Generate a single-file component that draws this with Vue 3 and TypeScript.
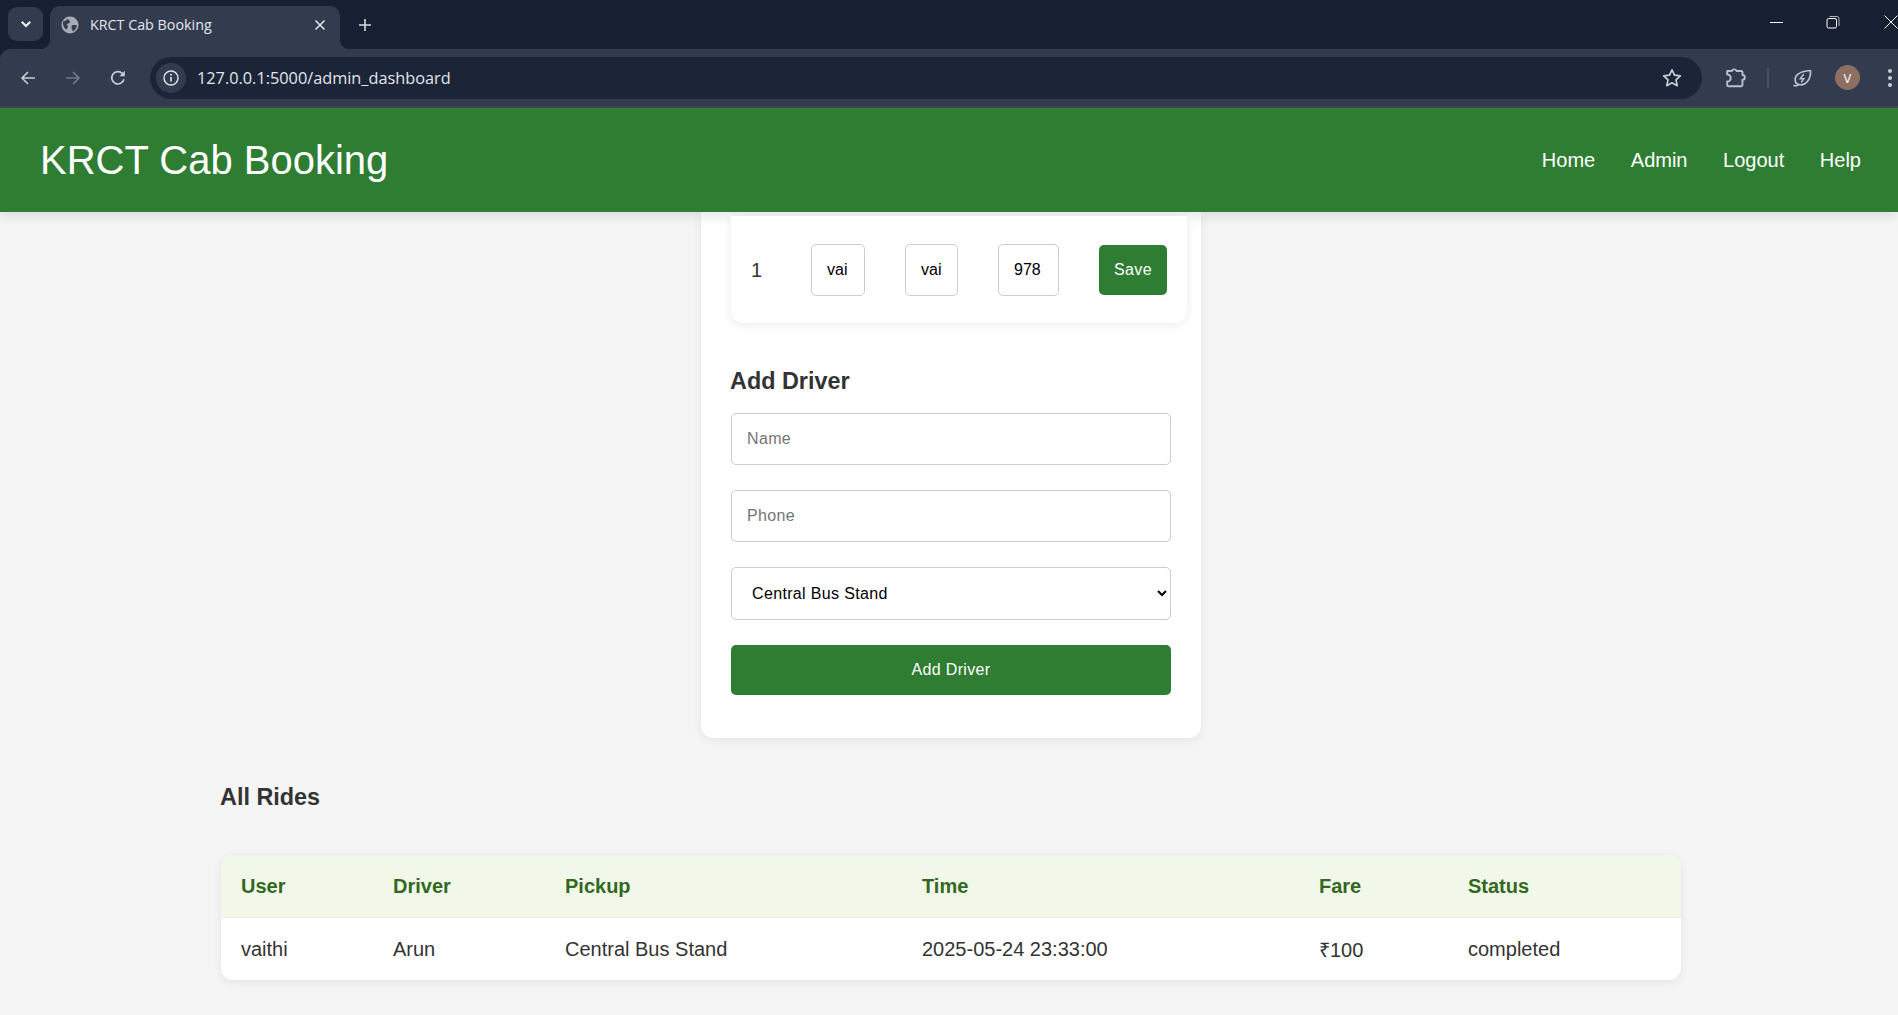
<script setup lang="ts">
interface Ride { user: string; driver: string; pickup: string; time: string; fare: string; status: string }
const rides: Ride[] = [
  { user: 'vaithi', driver: 'Arun', pickup: 'Central Bus Stand', time: '2025-05-24 23:33:00', fare: '₹100', status: 'completed' },
]
const heads: string[] = ['User', 'Driver', 'Pickup', 'Time', 'Fare', 'Status']
const cols: number[] = [152, 172, 357, 397, 149, 233]
</script>

<template>
  <div class="page">
    <div class="chrome">
      <div class="tabstrip">
        <div class="tabsearch">
          <svg width="12" height="12" viewBox="0 0 12 12"><path d="M1.800 3.800l4.200 4.200 4.200-4.200" fill="none" stroke="#eef0f4" stroke-width="2"/></svg>
        </div>
        <div class="tab">
          <svg class="favicon" width="18" height="18" viewBox="0 0 18 18">
            <circle cx="9" cy="9" r="8.500" fill="#a6abb5"/>
            <path d="M2 5.500c2 0 3-1 4-2.500 1 1 3 1 3 3 0 1.500-2 1-3 2-.6.800 1 1.500 1 3 0 1-1 1-1.500 2.500C4 13 1.500 10 2 5.500zM11 9.500c1.500-.8 3-.5 4.800-.2 0 2.500-1.500 5-3.800 6.200-.5-1.500-2.500-4.500-1-6z" fill="#343d50"/>
          </svg>
          <span class="tabtitle">KRCT Cab Booking</span>
          <svg class="tabclose" width="12" height="12" viewBox="0 0 12 12"><path d="M1.500 1.500l9 9M10.500 1.500l-9 9" stroke="#e3e6ec" stroke-width="1.500"/></svg>
        </div>
        <svg class="plus" width="14" height="14" viewBox="0 0 14 14"><path d="M7 1v12M1 7h12" stroke="#d8dce4" stroke-width="1.600"/></svg>
        <div class="winctrls">
          <svg width="14" height="14" viewBox="0 0 14 14"><path d="M0 7.500h13" stroke="#fff" stroke-width="1"/></svg>
          <svg class="restore" width="14" height="14" viewBox="0 0 14 14"><rect x="1" y="3.500" width="9.500" height="9.500" rx="1.500" fill="none" stroke="#fff"/><path d="M3.500 1.500h7.500a2 2 0 0 1 2 2v7.500" fill="none" stroke="#aeb3bd"/></svg>
          <svg width="14" height="14" viewBox="0 0 14 14"><path d="M.5.500l13 13M13.500.500l-13 13" stroke="#fff"/></svg>
        </div>
      </div>
      <div class="toolbar">
        <svg class="tb" width="16" height="16" viewBox="0 0 16 16"><path d="M15 8H2M8 2L2 8l6 6" fill="none" stroke="#c8ccd6" stroke-width="1.600"/></svg>
        <svg class="tb" width="16" height="16" viewBox="0 0 16 16"><path d="M1 8h13M8 2l6 6-6 6" fill="none" stroke="#737a89" stroke-width="1.600"/></svg>
        <svg class="tb" width="16" height="16" viewBox="0 0 16 16"><path d="M14 9.300A6.200 6.200 0 1 1 12.300 3.300L14 5" fill="none" stroke="#c8ccd6" stroke-width="1.700"/><path d="M14.800 .800v5.400h-5.400z" fill="#c8ccd6"/></svg>
        <div class="omnibox">
          <div class="infochip">
            <svg width="16" height="16" viewBox="0 0 16 16"><circle cx="8" cy="8" r="7" fill="none" stroke="#dfe3ea" stroke-width="1.400"/><path d="M8 7v4.500" stroke="#dfe3ea" stroke-width="1.600"/><circle cx="8" cy="4.800" r="1" fill="#dfe3ea"/></svg>
          </div>
          <span class="url">127.0.0.1:5000/admin_dashboard</span>
          <svg class="star" width="20" height="20" viewBox="0 0 20 20"><path d="M10 1.800l2.500 5.400 5.800.7-4.300 4 1.200 5.800-5.200-2.900-5.200 2.900 1.200-5.800-4.300-4 5.800-.7z" fill="none" stroke="#c8ccd6" stroke-width="1.700" stroke-linejoin="round"/></svg>
        </div>
        <svg class="ext" width="20" height="20" viewBox="2 2 17 17"><path d="M3 4.500H7a2.200 2.200 0 0 1 4 0h4a1 1 0 0 1 1 1V8a2 2 0 0 1 0 4v4.500a1 1 0 0 1-1 1H4a1 1 0 0 1-1-1v-3a3 3 0 0 0 0-6z" fill="none" stroke="#b9c0cf" stroke-width="1.600" stroke-linejoin="round"/></svg>
        <div class="divider"></div>
        <svg class="leaf" width="20" height="20" viewBox="0 0 20 20"><path d="M4 15C1 9 6 3 18.500 2.500 19 12 13 18.500 7 16.500c-1-.3-2-.7-3-1.500zM2 17.500c1 .4 3 .4 4.500-.6" fill="none" stroke="#b9c0cf" stroke-width="1.700" stroke-linecap="round" stroke-linejoin="round"/><path d="M11.800 6L8.300 10.800h3.400L9.200 14.500" fill="none" stroke="#b9c0cf" stroke-width="1.500"/></svg>
        <div class="avatar">V</div>
        <svg class="dots" width="4" height="18" viewBox="0 0 4 18"><circle cx="2" cy="2" r="2" fill="#c8ccd6"/><circle cx="2" cy="9" r="2" fill="#c8ccd6"/><circle cx="2" cy="16" r="2" fill="#c8ccd6"/></svg>
      </div>
    </div>

    <header class="topbar">
      <h1>KRCT Cab Booking</h1>
      <nav class="nav">
        <a>Home</a><a>Admin</a><a>Logout</a><a>Help</a>
      </nav>
    </header>

    <main class="content">
      <section class="card">
        <div class="drivers">
          <span class="idcell">1</span>
          <input class="mini w54" value="vaithi" />
          <input class="mini w53" value="vaithi" />
          <input class="mini w61" value="978" />
          <button class="save">Save</button>
        </div>

        <h3 class="addtitle">Add Driver</h3>
        <form class="addform" @submit.prevent>
          <input class="field" placeholder="Name" />
          <input class="field" placeholder="Phone" />
          <select class="field sel"><option>Central Bus Stand</option></select>
          <button class="addbtn">Add Driver</button>
        </form>
      </section>

      <h3 class="ridestitle">All Rides</h3>
      <table class="rides">
        <colgroup><col v-for="(c, i) in cols" :key="i" :style="{ width: c + 'px' }" /></colgroup>
        <thead>
          <tr><th v-for="h in heads" :key="h">{{ h }}</th></tr>
        </thead>
        <tbody>
          <tr v-for="r in rides" :key="r.time">
            <td>{{ r.user }}</td><td>{{ r.driver }}</td><td>{{ r.pickup }}</td>
            <td>{{ r.time }}</td><td>{{ r.fare }}</td><td>{{ r.status }}</td>
          </tr>
        </tbody>
      </table>
    </main>
  </div>
</template>

<style>
html, body { margin: 0; overflow: hidden; background: #f5f5f5; }
</style>

<style scoped>
.page { height: 1015px; display: flex; flex-direction: column; overflow: hidden; font-family: "Liberation Sans", Arial, sans-serif; font-size: 20px; color: #333; background: #f5f5f5; }

.chrome { height: 108px; flex: none; background: #172033; font-family: "Open Sans", "Noto Sans", sans-serif; }
.tabstrip { height: 49px; display: flex; align-items: flex-start; box-sizing: border-box; padding: 7px 0 0 8px; position: relative; }
.tabsearch { width: 35px; height: 34px; border-radius: 9px; background: #333c4f; display: flex; align-items: center; justify-content: center; }
.tab { width: 290px; height: 43px; margin: -1px 0 0 7px; box-sizing: border-box; padding: 0 10px 6px 11px; background: #333c4f; border-radius: 10px 10px 0 0; display: flex; align-items: center; position: relative; }
.tab::before, .tab::after { content: ""; position: absolute; bottom: 0; width: 10px; height: 10px; }
.tab::before { left: -10px; background: radial-gradient(circle at 0 0, transparent 10px, #333c4f 10.500px); }
.tab::after { right: -10px; background: radial-gradient(circle at 100% 0, transparent 10px, #333c4f 10.500px); }
.favicon { flex: none; }
.tabtitle { margin-left: 11px; flex: 1; font-size: 14.300px; color: #e3e6ec; white-space: nowrap; }
.tabclose { flex: none; margin-right: 4px; }
.plus { margin: 11px 0 0 18px; }
.winctrls { position: absolute; right: 0; top: 15px; display: flex; gap: 42px; }
.restore { margin-right: 2px; }
.toolbar { height: 59px; box-sizing: border-box; background: #333c4f; border-bottom: 2px solid #3f4656; border-radius: 10px 0 0 0; display: flex; align-items: center; padding: 0 0 0 20px; }
.tb { flex: none; margin-right: 29px; }
.omnibox { width: 1552px; height: 42px; margin: 0 0 0 -5px; background: #1b2537; border-radius: 21px; display: flex; align-items: center; box-sizing: border-box; padding: 0 20px 0 6px; flex: none; }
.infochip { width: 30px; height: 30px; border-radius: 50%; background: #333c4f; display: flex; align-items: center; justify-content: center; flex: none; }
.url { margin-left: 11px; flex: 1; font-size: 16.300px; color: #e3e6ec; white-space: nowrap; }
.ext { flex: none; margin-left: 24px; }
.divider { width: 2px; height: 20px; background: #4a5161; margin-left: 21px; flex: none; }
.leaf { flex: none; margin-left: 23px; }
.avatar { flex: none; width: 25px; height: 25px; margin-left: 23px; border-radius: 50%; background: #8d6e63; color: #fff; font-size: 13px; display: flex; align-items: center; justify-content: center; }
.dots { flex: none; margin-left: 28px; }

.topbar { height: 104px; flex: none; box-sizing: border-box; background: #2e7d32; color: #fff; display: flex; align-items: center; justify-content: space-between; padding: 0 37px 0 40px; box-shadow: 0 4px 12px rgba(0,0,0,.1); position: relative; z-index: 2; }
.topbar h1 { margin: 0; font-size: 40px; font-weight: 400; }
.nav { display: flex; gap: 35.600px; }
.nav a { color: #fff; font-size: 20px; }

.content { flex: 1; min-height: 0; overflow: hidden; padding: 0 217px 0 221px; }
.card { width: 500px; box-sizing: border-box; margin: 0 auto; padding: 4px 14px 43px 30px; background: #fff; border-radius: 0 0 12px 12px; box-shadow: 0 2px 10px rgba(0,0,0,.08); }
.drivers { height: 107px; box-sizing: border-box; padding: 28px 20px 27px 20px; display: flex; align-items: center; gap: 40px; border-radius: 0 0 12px 12px; background: #fff; box-shadow: 0 2px 10px rgba(0,0,0,.08); position: relative; z-index: 3; }
.idcell { width: 20px; flex: none; }
.mini { height: 52px; box-sizing: border-box; padding: 0 15px; border: 1px solid #ccc; border-radius: 5px; font: 16px "Liberation Sans", Arial, sans-serif; color: #000; background: #fff; flex: none; }
.w54 { width: 54px; padding-right: 17px; }
.w53 { width: 53px; }
.w61 { width: 61px; }
.save { width: 68px; height: 50px; flex: none; border: 0; border-radius: 5px; background: #2e7d32; color: #fff; font: 16px "Liberation Sans", Arial, sans-serif; letter-spacing: .35px; padding: 0; }

.addtitle, .ridestitle { font-size: 23.400px; font-weight: 700; color: #333; line-height: 27px; }
.addtitle { margin: 45px 0 18px -1px; }
.addform { display: flex; flex-direction: column; gap: 25px; width: 440px; }
.field { height: 52px; width: 440px; box-sizing: border-box; padding: 0 15px; border: 1px solid #ccc; border-radius: 5px; font: 16px "Liberation Sans", Arial, sans-serif; letter-spacing: .35px; color: #000; background: #fff; }
.sel { height: 53px; padding: 0 16px; }
.addbtn { width: 440px; height: 50px; border: 0; border-radius: 5px; background: #2e7d32; color: #fff; font: 16px "Liberation Sans", Arial, sans-serif; letter-spacing: .35px; }

.ridestitle { margin: 46px 0 44px -1px; }
.rides { width: 1460px; table-layout: fixed; border-collapse: separate; border-spacing: 0; background: #fff; border-radius: 12px; overflow: hidden; box-shadow: 0 2px 10px rgba(0,0,0,.08); }
.rides th { height: 63px; box-sizing: border-box; padding: 0 20px; text-align: left; background: #f1f8e9; color: #33691e; font-weight: 700; font-size: 20px; border-bottom: 1px solid #eee; }
.rides td { height: 62px; box-sizing: border-box; padding: 0 20px; font-size: 20px; color: #333; white-space: nowrap; }
</style>
